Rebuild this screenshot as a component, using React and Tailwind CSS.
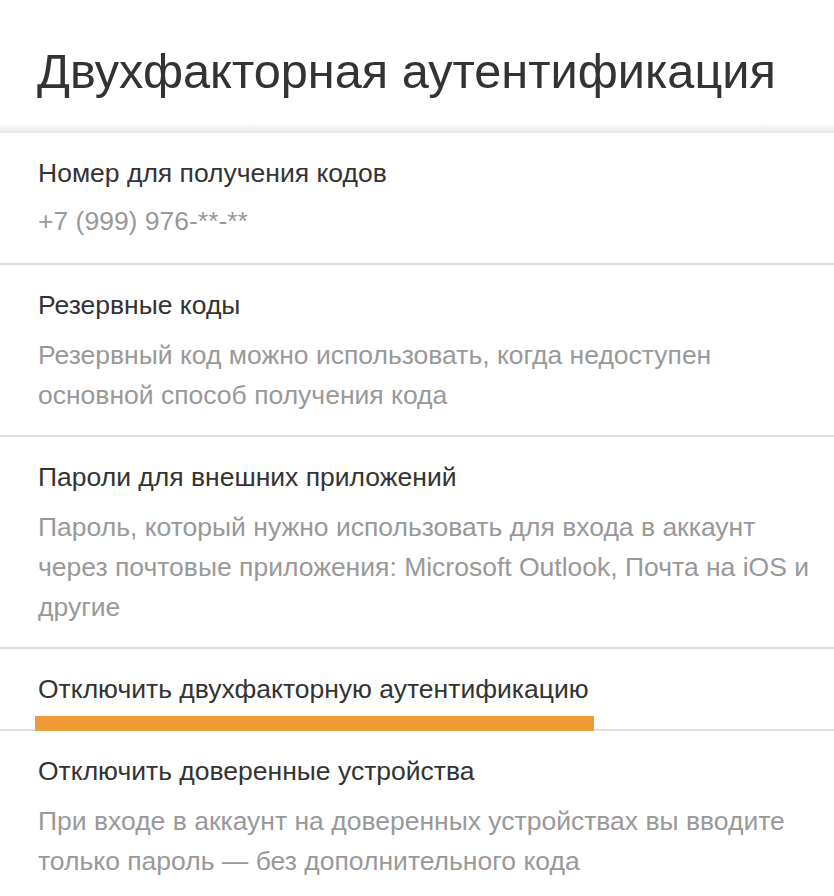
export default function App() {
  const font = { fontFamily: '"Liberation Sans", Arial, sans-serif' };
  return (
    <div className="w-[834px] h-[896px] overflow-hidden bg-white" style={font}>
      <div className="h-[123px] flex items-center pl-[37px]">
        <h1 className="text-[48.7px] leading-none text-[#333] mt-[20px]">Двухфакторная аутентификация</h1>
      </div>
      <div className="h-[10px] bg-gradient-to-b from-white to-[#e6e6e6]" />

      <div className="pl-[38px] pr-[14px] pt-5 pb-[22px]">
        <div className="text-[26.5px] leading-[40px] text-[#333]">Номер для получения кодов</div>
        <div className="mt-[8px] text-[26.5px] leading-[40px] text-[#999]">+7 (999) 976-**-**</div>
      </div>
      <div className="h-[2px] bg-[#dedede]" />

      <div className="pl-[38px] pr-[14px] pt-5 pb-5">
        <div className="text-[26.5px] leading-[40px] text-[#333]">Резервные коды</div>
        <div className="mt-[10px] text-[26.5px] leading-[40px] text-[#999]">
          Резервный код можно использовать, когда недоступен основной способ получения кода
        </div>
      </div>
      <div className="h-[2px] bg-[#dedede]" />

      <div className="pl-[38px] pr-[14px] pt-5 pb-5">
        <div className="text-[26.5px] leading-[40px] text-[#333]">Пароли для внешних приложений</div>
        <div className="mt-[10px] text-[26.5px] leading-[40px] text-[#999]">
          Пароль, который нужно использовать для входа в аккаунт через почтовые приложения: Microsoft Outlook, Почта на iOS и другие
        </div>
      </div>
      <div className="h-[2px] bg-[#dedede]" />

      <div className="relative pl-[38px] pr-[14px] pt-5 pb-5">
        <div className="text-[26.5px] leading-[40px] text-[#333]">Отключить двухфакторную аутентификацию</div>
        <div className="absolute left-[35px] top-[67px] w-[559px] h-[15px] bg-[#f09a38] z-10" />
      </div>
      <div className="h-[2px] bg-[#dedede]" />

      <div className="pl-[38px] pr-[14px] pt-5 pb-5">
        <div className="text-[26.5px] leading-[40px] text-[#333]">Отключить доверенные устройства</div>
        <div className="mt-[10px] text-[26.5px] leading-[40px] text-[#999]">
          При входе в аккаунт на доверенных устройствах вы вводите только пароль — без дополнительного кода
        </div>
      </div>
    </div>
  );
}
